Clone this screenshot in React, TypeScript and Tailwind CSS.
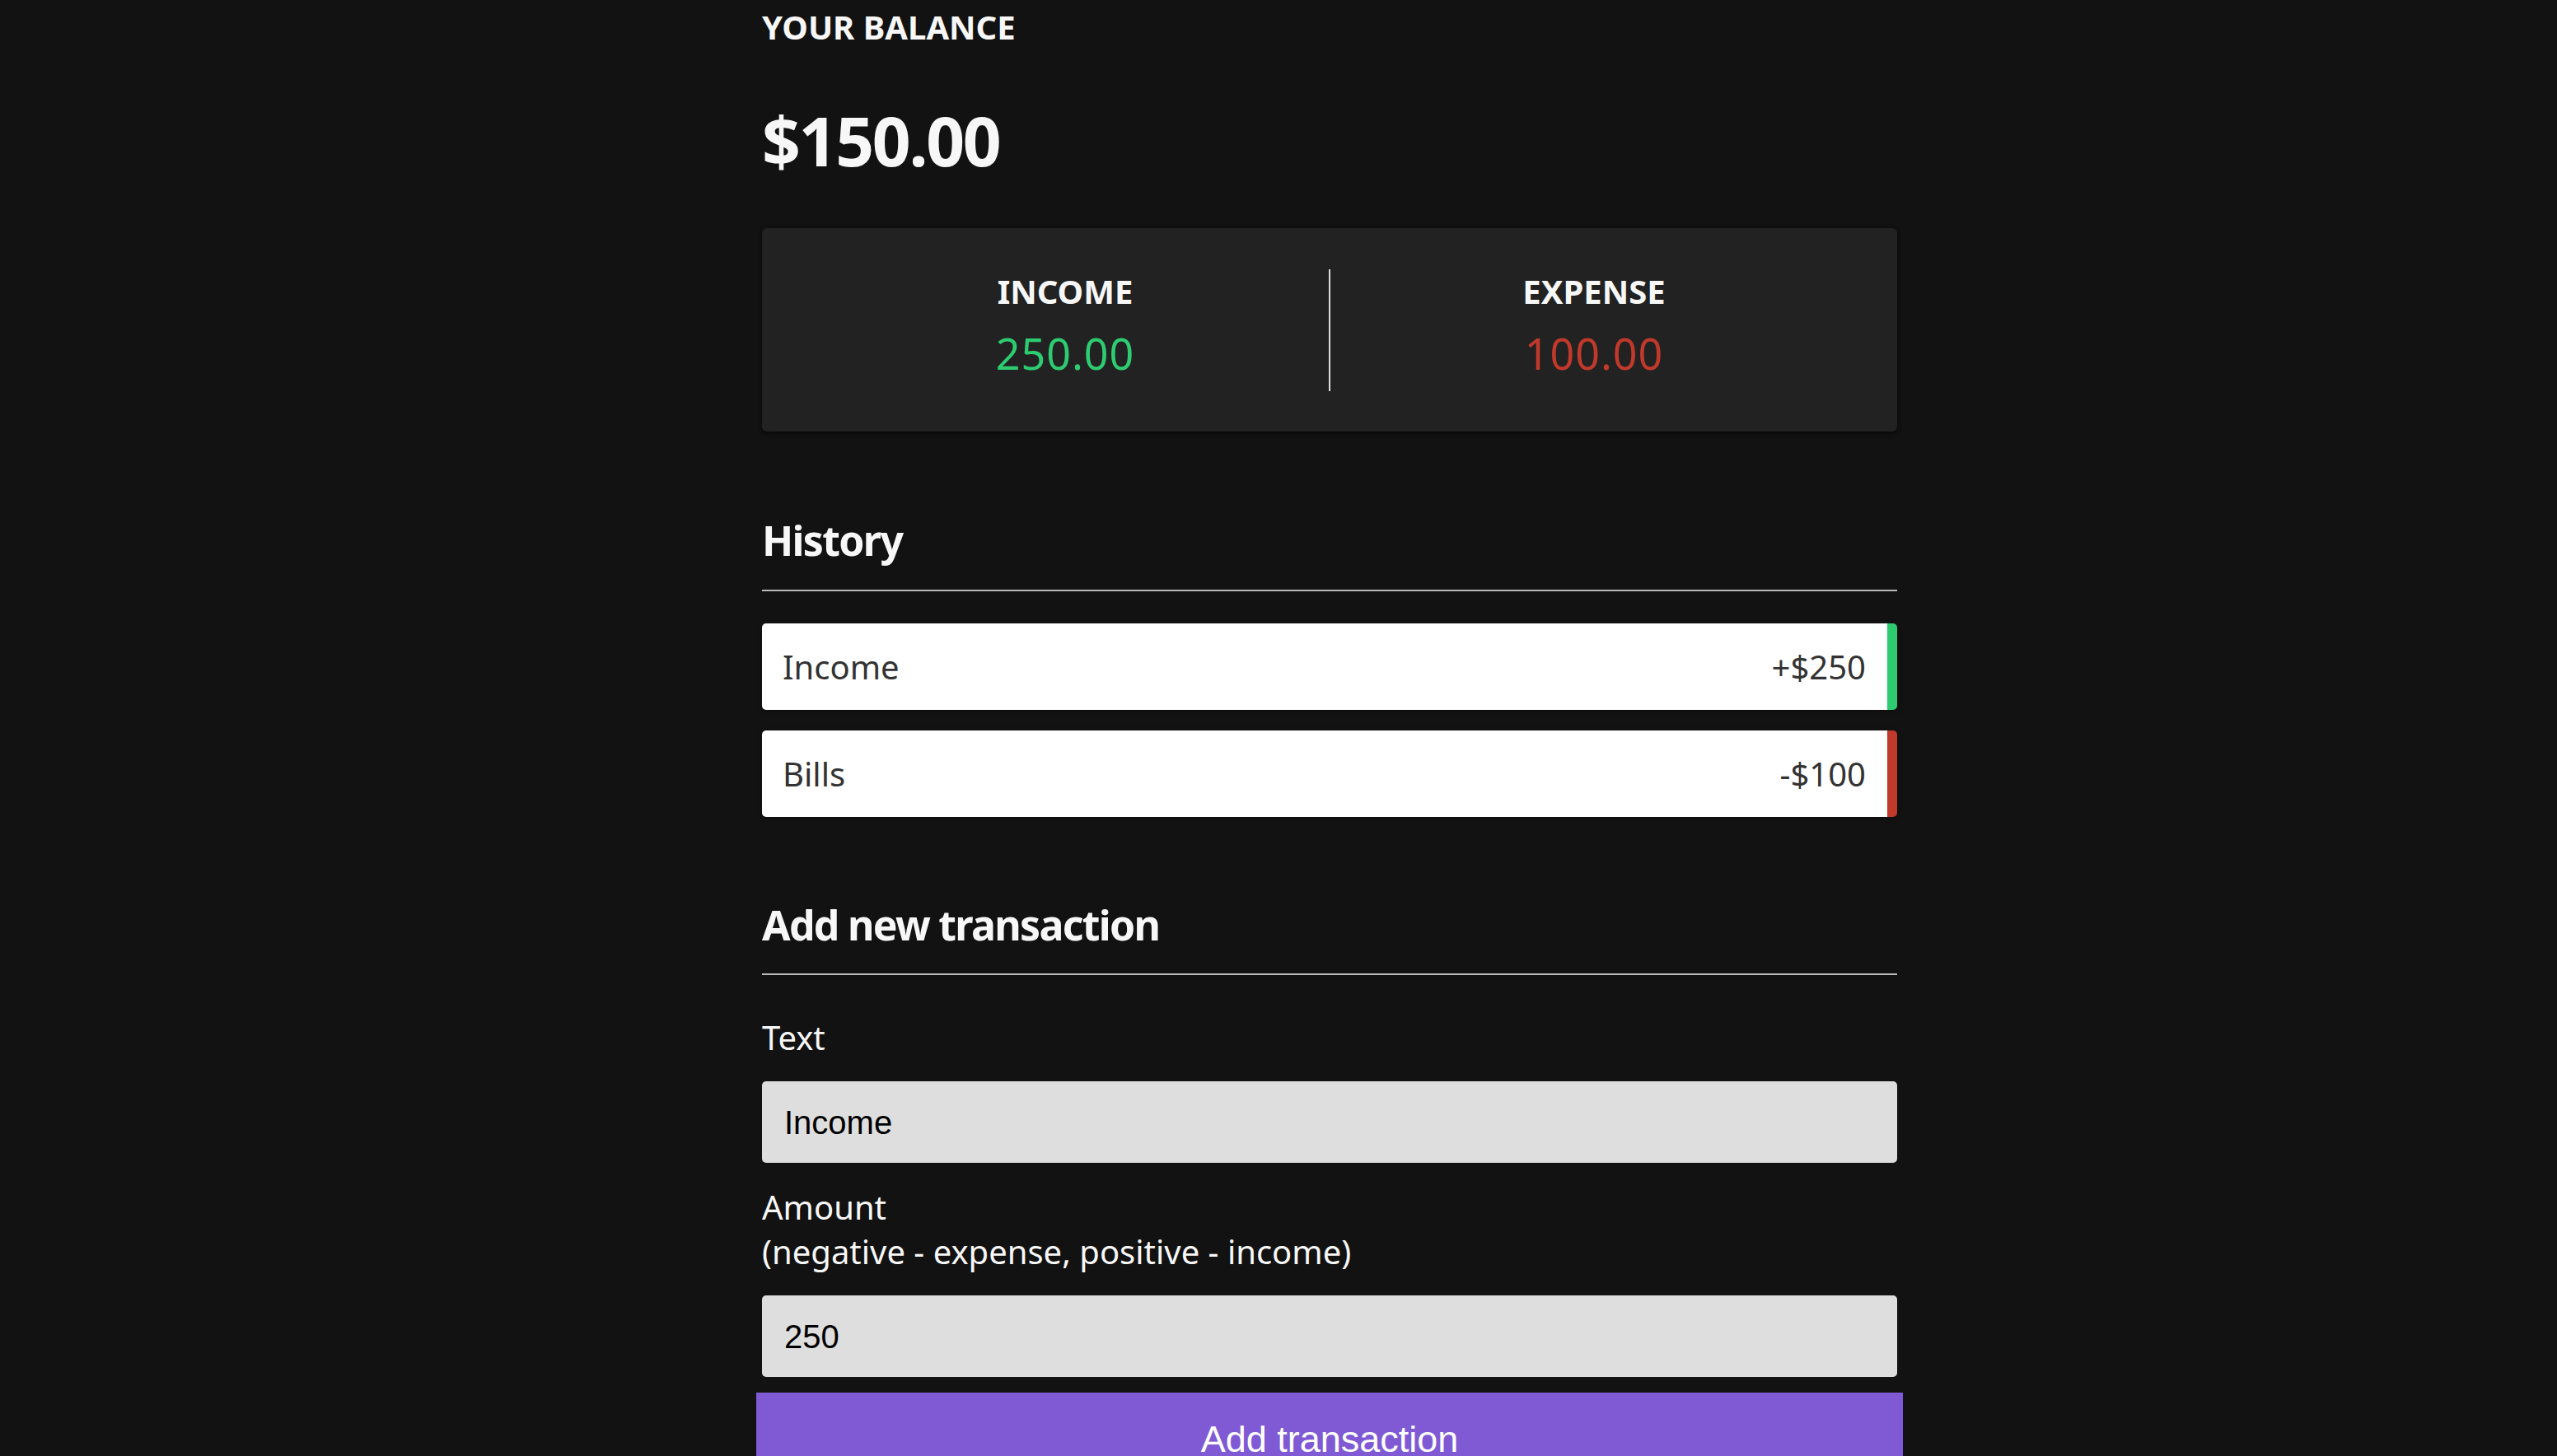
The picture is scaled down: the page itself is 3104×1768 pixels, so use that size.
import { useState } from "react"

type Tx = { id: number; text: string; amount: number }

const initial: Tx[] = [
  { id: 1, text: "Income", amount: 250 },
  { id: 2, text: "Bills", amount: -100 },
]

export default function App() {
  const [transactions] = useState<Tx[]>(initial)
  const [text, setText] = useState("Income")
  const [amount, setAmount] = useState("250")

  const amounts = transactions.map((t) => t.amount)
  const total = amounts.reduce((a, b) => a + b, 0).toFixed(2)
  const income = amounts.filter((a) => a > 0).reduce((a, b) => a + b, 0).toFixed(2)
  const expense = Math.abs(amounts.filter((a) => a < 0).reduce((a, b) => a + b, 0)).toFixed(2)

  return (
    <div className="min-h-screen h-[1768px] overflow-hidden bg-[#121212] font-['Noto_Sans','Open_Sans',sans-serif] text-[#f7f7f7]">
      <div className="flex justify-center pl-[124px]">
        <div className="w-[1378px] pt-[6px]">
          {/* Balance */}
          <h4 className="text-[40px] leading-[54px] font-bold uppercase">Your Balance</h4>
          <h1 className="mt-[60px] text-[82px] leading-[100px] font-bold tracking-[-2.3px]">${total}</h1>

          {/* Income / expense card */}
          <div className="mt-[57px] flex rounded-[6px] bg-[#222222] px-[48px] pt-[50px] pb-[49px] shadow-[0_2px_6px_rgba(0,0,0,0.25),0_2px_4px_rgba(0,0,0,0.4)]">
            <div className="flex-1 border-r-2 border-[#dedede] text-center">
              <h4 className="text-[40px] leading-[54px] font-bold uppercase">Income</h4>
              <p className="mt-[13px] mb-[11px] text-[52px] leading-[70px] tracking-[1px] text-[#2ecc71]">{income}</p>
            </div>
            <div className="flex-1 text-center">
              <h4 className="text-[40px] leading-[54px] font-bold uppercase">Expense</h4>
              <p className="mt-[13px] mb-[11px] text-[52px] leading-[70px] tracking-[1px] text-[#c0392b]">{expense}</p>
            </div>
          </div>

          {/* History */}
          <h3 className="mt-[98px] border-b-2 border-[#bbbbbb] pb-[26px] text-[50px] leading-[68px] font-bold tracking-[-1.7px]">
            History
          </h3>
          <ul className="mt-[39px] flex flex-col gap-[25px]">
            {transactions.map((t) => (
              <li
                key={t.id}
                className={`flex justify-between rounded-[5px] bg-white py-[25px] pl-[25px] pr-[26px] text-[40px] leading-[55px] text-[#333333] shadow-[0_2px_6px_rgba(0,0,0,0.25)] border-r-[12px] ${
                  t.amount < 0 ? "border-[#c0392b]" : "border-[#2ecc71]"
                }`}
              >
                <span>{t.text}</span>
                <span>
                  {t.amount < 0 ? "-" : "+"}${Math.abs(t.amount)}
                </span>
              </li>
            ))}
          </ul>

          {/* Form */}
          <h3 className="mt-[97px] border-b-2 border-[#bbbbbb] pb-[25px] text-[50px] leading-[68px] font-bold tracking-[-1.7px]">
            Add new transaction
          </h3>
          <form onSubmit={(e) => e.preventDefault()}>
            <label htmlFor="text" className="mt-[49px] block text-[40px] leading-[54px]">
              Text
            </label>
            <input
              id="text"
              type="text"
              value={text}
              onChange={(e) => setText(e.target.value)}
              placeholder="Enter text..."
              className="mt-[26px] block h-[99px] w-full rounded-[5px] bg-[#dedede] pt-[2px] pl-[27px] pr-[25px] font-['Liberation_Sans',Arial,sans-serif] text-[40px] text-black outline-none"
            />
            <label htmlFor="amount" className="mt-[27px] block text-[40px] leading-[54px]">
              Amount <br />
              (negative - expense, positive - income)
            </label>
            <input
              id="amount"
              type="text"
              value={amount}
              onChange={(e) => setAmount(e.target.value)}
              placeholder="Enter amount..."
              className="mt-[26px] block h-[99px] w-full rounded-[5px] bg-[#dedede] pt-[2px] pl-[27px] pr-[25px] font-['Liberation_Sans',Arial,sans-serif] text-[40px] text-black outline-none"
            />
            <button
              type="submit"
              className="mt-[19px] -mx-[7px] block w-[1392px] bg-[#805ad5] pt-[32px] pb-[32px] font-['Liberation_Sans',Arial,sans-serif] text-[45px] leading-[50px] text-white"
            >
              Add transaction
            </button>
          </form>
        </div>
      </div>
    </div>
  )
}
